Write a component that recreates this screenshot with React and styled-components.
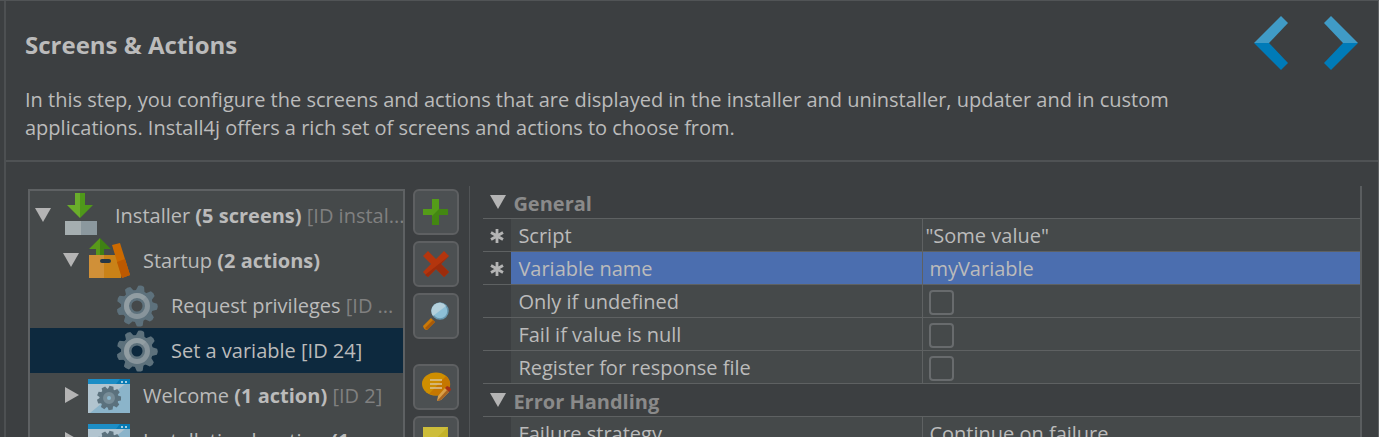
import { useState } from 'react';

import styled, { createGlobalStyle, css } from 'styled-components';

const GlobalStyle = createGlobalStyle`
    * {
        box-sizing: border-box;
    }

    body {
        margin: 0;
        background: #3c3f41;
    }

    button, input {
        font: inherit;
        color: inherit;
    }
`;

const Window = styled.div`
    display: flex;
    flex-direction: column;
    height: 100vh;
    overflow: hidden;
    padding-left: 4px;
    border-top: 1px solid #515456;
    border-right: 1px solid #606365;
    background: #3c3f41;
    color: #bbbbbb;
    font-family: 'Open Sans', 'Noto Sans', sans-serif;
    font-size: 20px;
    line-height: 28px;
`;

const Content = styled.main`
    display: flex;
    flex-direction: column;
    flex: 1;
    min-height: 0;
    border-left: 2px solid #4d5052;
`;

const Header = styled.header`
    display: flex;
    justify-content: space-between;
    align-items: flex-start;
    padding: 15px 19px 18px 19px;
    border-bottom: 2px solid #4f5254;
`;

const Intro = styled.div`
    max-width: 1180px;
`;

const Title = styled.h1`
    margin: 14px 0 26px;
    font-size: 24px;
    font-weight: 700;
    line-height: 30px;
`;

const Description = styled.p`
    margin: 0;
`;

const Steps = styled.nav`
    display: flex;
    flex: none;
    gap: 35px;
`;

const StepButton = styled.button`
    display: block;
    padding: 0;
    border: 0;
    background: none;
    cursor: pointer;
`;

const Panes = styled.div`
    display: grid;
    grid-template-columns: 51fr 100fr;
    flex: 1;
    min-height: 0;
    padding-top: 24px;
`;

const TreePane = styled.section`
    display: flex;
    align-items: flex-start;
    gap: 8px;
    min-width: 0;
    height: 100%;
    padding: 3px 10px 0 22px;
    overflow: hidden;
`;

const Tree = styled.ul`
    flex: 1;
    min-width: 0;
    height: 100%;
    margin: 0;
    padding: 2px 0 0;
    overflow: hidden;
    border: 2px solid #5e6163;
    border-bottom: 0;
    background: #45494a;
    list-style: none;
`;

const TreeRow = styled.li`
    display: flex;
    align-items: center;
    height: 45px;
    padding-left: ${(props) => 5 + props.$level * 28}px;
    white-space: nowrap;
    cursor: default;

    ${props => props.$selected && css`
        background: #0d293e;
    `}
`;

const Toggle = styled.button`
    display: block;
    flex: none;
    width: 16px;
    height: 16px;
    margin: 0 9px 2px 0;
    padding: 0;
    border: 0;
    background: none;

    svg {
        display: block;
    }
`;

const ToggleSpace = styled.span`
    flex: none;
    width: 25px;
`;

const IconSlot = styled.span`
    display: flex;
    flex: none;
    justify-content: center;
    width: 42px;
    margin-right: 13px;
`;

const RowLabel = styled.span`
    min-width: 0;
`;

const RowId = styled.span`
    color: ${(props) => props.$selected ? '#bbbbbb' : '#808080'};
`;

const Toolbar = styled.div`
    display: flex;
    flex: none;
    flex-direction: column;
    gap: 6px;
`;

const ToolGroup = styled.div`
    display: flex;
    flex-direction: column;
    gap: 6px;
    margin-bottom: 19px;
`;

const ToolButton = styled.button`
    display: flex;
    justify-content: center;
    align-items: center;
    width: 46px;
    height: 46px;
    padding: 0;
    border: 2px solid #5e6062;
    border-radius: 6px;
    background: #4c5052;
    cursor: pointer;
`;

const PropertyPane = styled.section`
    min-width: 0;
    padding: 0 16px 0 13px;
    overflow: hidden;
    border-left: 1px solid #515456;
`;

const PropertyTable = styled.table`
    width: 100%;
    table-layout: fixed;
    border-collapse: separate;
    border-spacing: 0;
    border-right: 2px solid #5a5d5f;
`;

const MarkColumn = styled.col`
    width: 28px;
`;

const NameColumn = styled.col`
    width: 47%;
`;

const GroupCell = styled.th`
    height: 33px;
    padding: 4px 0 0 7px;
    border-bottom: 1px solid #5e6162;
    color: #8a8a8a;
    font-weight: 700;
    line-height: 28px;
    text-align: left;
`;

const GroupTitle = styled.span`
    display: flex;
    align-items: center;
    gap: 7px;
`;

const GroupToggle = styled(Toggle)`
    margin: 0 0 4px;
`;

const MarkCell = styled.td`
    height: 33px;
    padding: 2px 0 0 7px;
    border-bottom: 1px solid #5e6162;
    line-height: 1px;
`;

const NameCell = styled.th`
    height: 33px;
    padding: 2px 7px 0;
    border-right: 1px solid #5e6162;
    border-bottom: 1px solid #5e6162;
    background: ${(props) => props.$selected ? '#4b6eaf' : '#45494a'};
    font-weight: 400;
    text-align: left;
    white-space: nowrap;
`;

const ValueCell = styled.td`
    height: 33px;
    padding: 2px 6px 0 ${(props) => props.$code ? 2 : 6}px;
    border-bottom: 1px solid #5e6162;
    background: ${(props) => props.$selected ? '#4b6eaf' : '#45494a'};
    white-space: nowrap;
`;

const CheckBox = styled.input`
    display: block;
    width: 25px;
    height: 25px;
    margin: 0;
    appearance: none;
    border: 2px solid #686b6d;
    border-radius: 4px;

    &:checked {
        background: #686b6d;
    }
`;

const PreviousIcon = () => (
    <svg width="35" height="54" viewBox="0 0 35 54" aria-hidden="true">
        <path d="M0 27 27 0l7 7-19 20z" fill="#409bc6" />
        <path d="M0 27h15l19 20-7 7z" fill="#007bb8" />
    </svg>
);

const NextIcon = () => (
    <svg width="35" height="54" viewBox="0 0 35 54" aria-hidden="true">
        <path d="M34 27 7 0 0 7l19 20z" fill="#409bc6" />
        <path d="M34 27H19L0 47l7 7z" fill="#007bb8" />
    </svg>
);

const TriangleIcon = ({ open }) => (
    <svg width="16" height="16" viewBox="0 0 16 16" aria-hidden="true">
        <path d={open ? 'M0 1h16L8 15z' : 'M2 0v16l14-8z'} fill="#b4b4b4" />
    </svg>
);

const AsteriskIcon = () => (
    <svg width="14" height="16" viewBox="0 0 14 16" role="img" aria-label="Required">
        <path d="M7 1v14M1 4.500l12 7M13 4.500l-12 7" stroke="#b4b4b4" strokeWidth="2.800" />
    </svg>
);

const InstallerIcon = () => (
    <svg width="34" height="45" viewBox="0 0 34 45">
        <path d="M11 0h5v25L3 12h8z" fill="#6aad2b" />
        <path d="M16 0h5v12h8L16 25z" fill="#4f981a" />
        <path d="M1 28h16v14H1z" fill="#a5aeb0" />
        <path d="M17 28h16v14H17z" fill="#8b989e" />
    </svg>
);

const StartupIcon = () => (
    <svg width="42" height="45" viewBox="0 0 42 45">
        <path d="M12 0v18H8v-7H1z" fill="#58991a" />
        <path d="M12 0v18h4v-7h7z" fill="#3f8114" />
        <path d="M1 17h16v23H1z" fill="#d09038" />
        <path d="M16 17h17v23H16z" fill="#c98218" />
        <rect x="12" y="21" width="11" height="4" rx="2" fill="#263746" />
        <path d="m24 7 8-2 10 32-8 3z" fill="#cc6a00" />
        <path d="m29 24 8-3 5 16-8 3z" fill="#bd5900" />
    </svg>
);

const teeth = [0, 40, 80, 120, 160, 200, 240, 280, 320];

const GearIcon = () => (
    <svg width="42" height="42" viewBox="0 0 42 42">
        <g fill="#5d717c">
            {teeth.map((angle) => (
                <path key={angle} d="m16 8 2-7q3-1.500 6 0l2 7z" transform={`rotate(${angle + 12} 21 21)`} />
            ))}
            <path fillRule="evenodd" d="M21 5a16 16 0 1 0 0 32 16 16 0 0 0 0-32zm0 10.500a5.500 5.500 0 1 1 0 11 5.500 5.500 0 0 1 0-11z" />
        </g>
        <circle cx="21" cy="21" r="10.500" fill="none" stroke="#87949b" strokeWidth="5" />
        <path d="M11.800 30.200A13 13 0 0 1 30.200 11.800L26.700 15.300A8 8 0 0 0 15.300 26.700z" fill="#9ba6aa" opacity=".5" />
    </svg>
);

const ScreenIcon = () => (
    <svg width="42" height="34" viewBox="0 0 42 34">
        <path d="M0 0h42v34H0z" fill="#8bb4ca" />
        <path d="M0 5h37L2 34H0z" fill="#b1c4cf" />
        <path d="M0 0h42v5H0z" fill="#1c8dc5" />
        <path d="M32 0h10v5H28z" fill="#087bb5" />
        <path d="M33 2h2v2h-2zM37 2h2v2h-2z" fill="#a8cfe2" />
        <g fill="#5b717d">
            {teeth.map((angle) => (
                <path key={angle} d="m18 11 1-4h4l1 4z" transform={`rotate(${angle + 12} 21 19)`} />
            ))}
            <circle cx="21" cy="19" r="9.500" />
        </g>
        <circle cx="21" cy="19" r="4" fill="#8bb8cf" stroke="#778c97" strokeWidth="4" />
    </svg>
);

const AddIcon = () => (
    <svg width="26" height="26" viewBox="0 0 26 26">
        <path d="M9 0h7v10h9v6h-9v10H9V16H0v-6h9z" fill="#549c18" />
        <path d="M16 10h9v6h-9v10H9v-9z" fill="#438712" />
    </svg>
);

const DeleteIcon = () => (
    <svg width="26" height="26" viewBox="0 0 26 26">
        <path d="m5 0 8 8 8-8 5 5-8 8 8 8-5 5-8-8-8 8-5-5 8-8-8-8z" fill="#b4350d" />
        <path d="m26 5-8 8 8 8-5 5-8-8-8 8-3-2z" fill="#9c2c0c" />
    </svg>
);

const SearchIcon = () => (
    <svg width="28" height="28" viewBox="0 0 28 28">
        <path d="m9 16 4 4-8 8q-3 0-4-4z" fill="#c97908" />
        <path d="m11 18 2 2-8 8-2-2z" fill="#a95a08" />
        <circle cx="18" cy="9" r="8" fill="#8dbfd6" stroke="#6796ad" strokeWidth="1.500" />
        <path d="M11 14A8 8 0 0 1 24 4z" fill="#b4d0dc" />
    </svg>
);

const CommentIcon = () => (
    <svg width="30" height="30" viewBox="0 0 30 30">
        <ellipse cx="15" cy="12" rx="14" ry="11.500" fill="#ce8e00" />
        <path d="M25 4q5 5 4 10-3 9-14 9.500L8 22z" fill="#c57700" />
        <path d="M9 8h12M9 12h12M9 16h12" stroke="#d8c39b" strokeWidth="1.500" />
        <path d="m24 16 4 4-8 8-4 1 1-5z" fill="#d9a04a" />
        <path d="m26 18 2 2-8 8-4 1z" fill="#a96420" />
        <path d="m24 16 2-2q4 1 4 4l-2 2z" fill="#a53117" />
    </svg>
);

const NoteIcon = () => (
    <svg width="26" height="26" viewBox="0 0 26 26">
        <path d="M0 1h25v17l-7 7H0z" fill="#cdbd3a" />
        <path d="M25 1v17l-7 7H0z" fill="#c3b228" />
    </svg>
);

const treeRows = [
    { level: 0, icon: InstallerIcon, name: 'Installer', count: '(5 screens)', id: '[ID instal...', open: true },
    { level: 1, icon: StartupIcon, name: 'Startup', count: '(2 actions)', open: true },
    { level: 2, icon: GearIcon, name: 'Request privileges', id: '[ID ...' },
    { level: 2, icon: GearIcon, name: 'Set a variable', id: '[ID 24]' },
    { level: 1, icon: ScreenIcon, name: 'Welcome', count: '(1 action)', id: '[ID 2]', open: false },
    { level: 1, icon: ScreenIcon, name: 'Installation location', count: '(1 ...', open: false },
];

const groups = [
    {
        title: 'General',
        rows: [
            { name: 'Script', value: '"Some value"', required: true, code: true },
            { name: 'Variable name', value: 'myVariable', required: true, selected: true },
            { name: 'Only if undefined', check: 'undefined-only' },
            { name: 'Fail if value is null', check: 'fail-null' },
            { name: 'Register for response file', check: 'response-file' },
        ],
    },
    {
        title: 'Error Handling',
        rows: [
            { name: 'Failure strategy', value: 'Continue on failure' },
        ],
    },
];

const App = () => {
    const [selected, setSelected] = useState('Set a variable');

    return (
        <Window>
            <GlobalStyle />
            <Content>
                <Header>
                    <Intro>
                        <Title>Screens &amp; Actions</Title>
                        <Description>
                            In this step, you configure the screens and actions that are displayed in the installer and uninstaller, updater and in custom applications. Install4j offers a rich set of screens and actions to choose from.
                        </Description>
                    </Intro>
                    <Steps aria-label="Steps">
                        <StepButton aria-label="Previous step"><PreviousIcon /></StepButton>
                        <StepButton aria-label="Next step"><NextIcon /></StepButton>
                    </Steps>
                </Header>
                <Panes>
                    <TreePane>
                        <Tree role="tree" aria-label="Screens and actions">
                            {treeRows.map(({ level, icon: Icon, name, count, id, open }) => (
                                <TreeRow
                                    key={name}
                                    role="treeitem"
                                    aria-level={level + 1}
                                    aria-expanded={open}
                                    aria-selected={selected === name}
                                    $level={level}
                                    $selected={selected === name}
                                    onClick={() => setSelected(name)}
                                >
                                    {open === undefined
                                        ? <ToggleSpace />
                                        : <Toggle aria-label={open ? 'Collapse' : 'Expand'}><TriangleIcon open={open} /></Toggle>}
                                    <IconSlot aria-hidden="true"><Icon /></IconSlot>
                                    <RowLabel>
                                        {name} {count && <b>{count}</b>} {id && <RowId $selected={selected === name}>{id}</RowId>}
                                    </RowLabel>
                                </TreeRow>
                            ))}
                        </Tree>
                        <Toolbar role="toolbar" aria-label="Edit">
                            <ToolGroup>
                                <ToolButton aria-label="Add"><AddIcon /></ToolButton>
                                <ToolButton aria-label="Delete"><DeleteIcon /></ToolButton>
                                <ToolButton aria-label="Search"><SearchIcon /></ToolButton>
                            </ToolGroup>
                            <ToolButton aria-label="Comment"><CommentIcon /></ToolButton>
                            <ToolButton aria-label="Note"><NoteIcon /></ToolButton>
                        </Toolbar>
                    </TreePane>
                    <PropertyPane>
                        <PropertyTable>
                            <colgroup>
                                <MarkColumn />
                                <NameColumn />
                                <col />
                            </colgroup>
                            {groups.map((group) => (
                                <tbody key={group.title}>
                                    <tr>
                                        <GroupCell colSpan={3}>
                                            <GroupTitle>
                                                <GroupToggle aria-label="Collapse"><TriangleIcon open /></GroupToggle>
                                                {group.title}
                                            </GroupTitle>
                                        </GroupCell>
                                    </tr>
                                    {group.rows.map((row) => (
                                        <tr key={row.name}>
                                            <MarkCell>{row.required && <AsteriskIcon />}</MarkCell>
                                            <NameCell scope="row" $selected={row.selected}>
                                                {row.check ? <label htmlFor={row.check}>{row.name}</label> : row.name}
                                            </NameCell>
                                            <ValueCell $selected={row.selected} $code={row.code}>
                                                {row.check ? <CheckBox type="checkbox" id={row.check} /> : row.value}
                                            </ValueCell>
                                        </tr>
                                    ))}
                                </tbody>
                            ))}
                        </PropertyTable>
                    </PropertyPane>
                </Panes>
            </Content>
        </Window>
    );
};

export default App;
